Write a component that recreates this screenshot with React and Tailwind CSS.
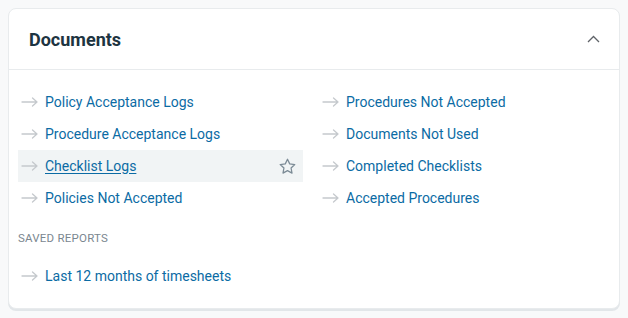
import React from 'react'

const leftLinks = ['Policy Acceptance Logs', 'Procedure Acceptance Logs', 'Checklist Logs', 'Policies Not Accepted']
const rightLinks = ['Procedures Not Accepted', 'Documents Not Used', 'Completed Checklists', 'Accepted Procedures']

function Arrow() {
  return (
    <svg width="17" height="10" viewBox="0 0 17 10" fill="none" stroke="#c5c9cd" strokeWidth="1.3" strokeLinecap="round" strokeLinejoin="round">
      <path d="M1 5h15M11.5 1l4.5 4-4.5 4" />
    </svg>
  )
}

function Star() {
  return (
    <svg width="19" height="19" viewBox="0 0 24 24" fill="none" stroke="#7c8b96" strokeWidth="1.6" strokeLinejoin="round">
      <path d="M12 2.8l2.8 5.9 6.4.8-4.7 4.4 1.2 6.4L12 17.2l-5.7 3.1 1.2-6.4-4.7-4.4 6.4-.8z" />
    </svg>
  )
}

function ReportLink({ label, active }) {
  return (
    <div className={`h-8 flex items-center pl-[3px] pr-[6px] ${active ? 'bg-[#f1f4f5]' : ''}`}>
      <Arrow />
      <span className={`ml-[7px] text-[14px] text-[#0b6ba4] ${active ? 'underline underline-offset-2' : ''}`}>{label}</span>
      {active && (
        <span className="ml-auto flex items-center">
          <Star />
        </span>
      )}
    </div>
  )
}

export default function App() {
  return (
    <div className="w-[628px] h-[318px] bg-[#f8f9fa] p-2" style={{ fontFamily: 'Roboto, "Liberation Sans", sans-serif' }}>
      <div className="w-[612px] h-[301px] bg-white border border-[#e8ebed] rounded-lg shadow-[0_2px_0_#e2e6e9]">
        {/* Header */}
        <div className="h-[61px] flex items-center justify-between pl-5 pr-[19px] border-b border-[#e8ebed]">
          <h2 className="text-[18px] font-bold text-[#1d3441]">Documents</h2>
          <svg width="13" height="8" viewBox="0 0 13 8" fill="none" stroke="#5f6368" strokeWidth="1.3">
            <path d="M1 7l5.5-5.5L12 7" />
          </svg>
        </div>

        {/* Links */}
        <div className="pt-4 px-[9px]">
          <div className="flex gap-4">
            <div className="w-[285px] flex flex-col">
              {leftLinks.map((l) => (
                <ReportLink key={l} label={l} active={l === 'Checklist Logs'} />
              ))}
            </div>
            <div className="w-[285px] flex flex-col">
              {rightLinks.map((l) => (
                <ReportLink key={l} label={l} />
              ))}
            </div>
          </div>

          <p className="mt-[18px] text-[11.5px] text-[#7b8790] uppercase tracking-[0.02em] leading-[12px]">Saved Reports</p>

          <div className="mt-[16px] w-[285px]">
            <ReportLink label="Last 12 months of timesheets" />
          </div>
        </div>
      </div>
    </div>
  )
}
